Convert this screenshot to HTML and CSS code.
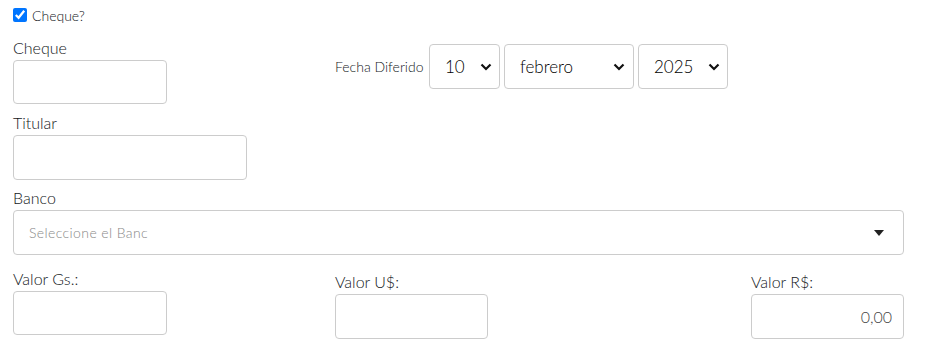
FILE: index.html
```html
<!DOCTYPE html>
<html lang="es">
<head>
    <meta charset="UTF-8">
    <meta name="viewport" content="width=device-width, initial-scale=1.0">
    <title>Cheque</title>
    <link rel="stylesheet" href="styles.css">
</head>
<body>
    <form class="cheque-form">
        <label class="check-row">
            <input type="checkbox" checked>
            <span>Cheque?</span>
        </label>

        <div class="row-top">
            <div class="field">
                <label for="cheque">Cheque</label>
                <input type="text" id="cheque" class="input input-sm">
            </div>

            <div class="fecha">
                <span class="fecha-label">Fecha Diferido</span>
                <div class="select-wrap sel-dia">
                    <select class="select">
                        <option>10</option>
                    </select>
                    <svg class="chevron" width="12" height="8" viewBox="0 0 12 8"><path d="M1.5 1.5 L6 6 L10.5 1.5" fill="none" stroke="#111" stroke-width="2.2"/></svg>
                </div>
                <div class="select-wrap sel-mes">
                    <select class="select">
                        <option>febrero</option>
                    </select>
                    <svg class="chevron" width="12" height="8" viewBox="0 0 12 8"><path d="M1.5 1.5 L6 6 L10.5 1.5" fill="none" stroke="#111" stroke-width="2.2"/></svg>
                </div>
                <div class="select-wrap sel-anio">
                    <select class="select">
                        <option>2025</option>
                    </select>
                    <svg class="chevron" width="12" height="8" viewBox="0 0 12 8"><path d="M1.5 1.5 L6 6 L10.5 1.5" fill="none" stroke="#111" stroke-width="2.2"/></svg>
                </div>
            </div>
        </div>

        <div class="field">
            <label for="titular">Titular</label>
            <input type="text" id="titular" class="input input-md">
        </div>

        <div class="field">
            <label>Banco</label>
            <div class="banco-select">
                <span class="placeholder">Seleccione el Banc</span>
                <svg class="caret" width="10" height="6" viewBox="0 0 10 6"><path d="M0 0 L10 0 L5 6 Z" fill="#222"/></svg>
            </div>
        </div>

        <div class="row-valores">
            <div class="field">
                <label for="valor-gs">Valor Gs.:</label>
                <input type="text" id="valor-gs" class="input input-sm">
            </div>
            <div class="field shifted">
                <label for="valor-us">Valor U$:</label>
                <input type="text" id="valor-us" class="input input-val">
            </div>
            <div class="field shifted">
                <label for="valor-rs">Valor R$:</label>
                <input type="text" id="valor-rs" class="input input-val amount" value="0,00">
            </div>
        </div>
    </form>
</body>
</html>
```

FILE: styles.css
```css
body {
    margin: 0;
    padding: 8px 23px 0 13px;
    font-family: Lato, "Open Sans", sans-serif;
    font-weight: 300;
    color: #14181b;
    background-color: white;
}

.check-row {
    display: flex;
    align-items: center;
    height: 14px;
    font-size: 14px;
}

.check-row input {
    width: 14px;
    height: 14px;
    margin: 0 5px 0 0;
}

.row-top {
    display: grid;
    grid-template-columns: 322px 1fr;
    margin-top: 14px;
}

.field {
    display: flex;
    flex-direction: column;
    align-items: flex-start;
}

.field label {
    font-size: 16px;
    line-height: 24px;
}

.input {
    box-sizing: border-box;
    height: 44px;
    border: 1px solid #ccc;
    border-radius: 4px;
    padding: 0 11px;
    font-family: inherit;
    font-weight: inherit;
    font-size: 16px;
    color: #444;
    background-color: white;
}

.input-sm {
    width: 154px;
}

.input-md {
    width: 234px;
    height: 45px;
}

.input-val {
    width: 153px;
    height: 45px;
}

.amount {
    text-align: right;
}

.fecha {
    display: flex;
    align-items: center;
    align-self: start;
    gap: 4px;
    margin-top: 8px;
}

.fecha-label {
    flex: 0 0 90px;
    font-size: 14px;
}

.select-wrap {
    position: relative;
    height: 45px;
}

.select {
    appearance: none;
    -webkit-appearance: none;
    box-sizing: border-box;
    width: 100%;
    height: 100%;
    border: 1px solid #ccc;
    border-radius: 4px;
    padding: 0 15px;
    font-family: inherit;
    font-weight: 300;
    font-size: 17px;
    color: #000;
    background-color: white;
}

.chevron {
    position: absolute;
    right: 8px;
    top: 19px;
    pointer-events: none;
}

.sel-dia {
    width: 71px;
}

.sel-mes {
    width: 130px;
}

.sel-mes .chevron {
    right: 9px;
}

.sel-anio {
    width: 90px;
}

.row-top + .field {
    margin-top: 7px;
}

.row-top + .field + .field {
    margin-top: 6px;
}

.banco-select {
    box-sizing: border-box;
    width: 100%;
    height: 45px;
    border: 1px solid #ccc;
    border-radius: 4px;
    padding: 0 19px 0 15px;
    display: flex;
    align-items: center;
    justify-content: space-between;
}

.placeholder {
    font-size: 14px;
    letter-spacing: 0.4px;
    color: #888;
}

.row-valores {
    display: grid;
    grid-template-columns: 322px 416px 1fr;
    margin-top: 12px;
}

.shifted {
    padding-top: 3px;
}
```
